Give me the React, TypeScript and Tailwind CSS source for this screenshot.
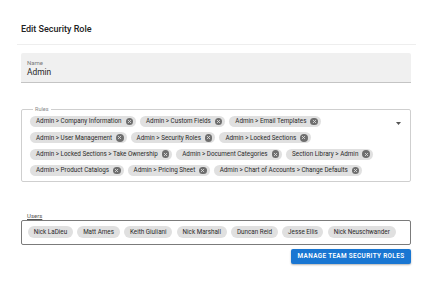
import { X } from "lucide-react";

const rules = [
  "Admin > Company Information",
  "Admin > Custom Fields",
  "Admin > Email Templates",
  "Admin > User Management",
  "Admin > Security Roles",
  "Admin > Locked Sections",
  "Admin > Locked Sections > Take Ownership",
  "Admin > Document Categories",
  "Section Library > Admin",
  "Admin > Product Catalogs",
  "Admin > Pricing Sheet",
  "Admin > Chart of Accounts > Change Defaults",
];

const users = [
  "Nick LaDieu",
  "Matt Ames",
  "Keith Giuliani",
  "Nick Marshall",
  "Duncan Reid",
  "Jesse Ellis",
  "Nick Neuschwander",
];

const DeleteIcon = () => (
  <span className="w-[7.5px] h-[7.5px] rounded-full bg-[#6e6e6e] flex items-center justify-center">
    <X size={5} strokeWidth={4} color="#e0e0e0" />
  </span>
);

const RuleChip = ({ label }: { label: string }) => (
  <div className="h-[11px] rounded-full bg-[#e0e0e0] inline-flex items-center pl-[6px] pr-[3px] gap-[4px]">
    <span className="text-[6.3px] leading-none text-[#2a2a2a] whitespace-nowrap">
      {label}
    </span>
    <DeleteIcon />
  </div>
);

export default function App() {
  return (
    <div className="w-[432px] h-[288px] bg-white font-['Roboto',sans-serif] overflow-hidden">
      {/* header */}
      <div className="ml-[17px] w-[399px] pt-[23px] pb-[8px] border-b border-[#eeeeee]">
        <h2 className="pl-[4px] text-[9px] leading-[13px] font-medium text-[#222]">
          Edit Security Role
        </h2>
      </div>

      <div className="ml-[21px] w-[390px] flex flex-col">
        {/* name field */}
        <div className="mt-[8px] h-[30px] bg-[#f0f0f0] rounded-t-[2px] border-b-[1.5px] border-[#c4c4c4] px-[6px] pt-[6px]">
          <div className="text-[6px] leading-[7px] text-[#7a7a7a]">Name</div>
          <div className="text-[8.4px] leading-[12px] text-[#1f1f1f]">Admin</div>
        </div>

        {/* rules */}
        <fieldset className="mt-[23px] border border-[#cfcfcf] rounded-[2px] pl-[8px] pr-[4px] pb-[5px]">
          <legend className="ml-[3px] px-[2px] text-[5.5px] leading-[6px] text-[#8a8a8a]">
            Rules
          </legend>
          <div className="flex pt-[4px]">
            <div className="w-[360px] flex flex-wrap gap-x-[4px] gap-y-[5.3px]">
              {rules.map((r) => (
                <RuleChip key={r} label={r} />
              ))}
            </div>
            <div className="flex-1 flex justify-center pt-[6px]">
              <svg width="5" height="3" viewBox="0 0 5 3">
                <path d="M0 0 L5 0 L2.5 3 Z" fill="#555" />
              </svg>
            </div>
          </div>
        </fieldset>

        {/* users */}
        <div className="mt-[29px] pl-[6px] text-[6px] leading-[9px] text-[#555] underline">
          Users
        </div>
        <div className="h-[25px] border-[1.5px] border-[#7b7b7b] rounded-[2px] flex items-center gap-[4.5px] pl-[6px]">
          {users.map((u) => (
            <div
              key={u}
              className="h-[12px] rounded-full bg-[#e0e0e0] flex items-center px-[5.75px] text-[6.3px] leading-none text-[#2a2a2a] whitespace-nowrap"
            >
              {u}
            </div>
          ))}
        </div>

        <button className="mt-[4px] self-end w-[120px] h-[15px] rounded-[2px] bg-[#1976d2] text-white text-[6.4px] font-semibold tracking-[0.35px] shadow-[0_1px_2px_rgba(0,0,0,0.3)]">
          MANAGE TEAM SECURITY ROLES
        </button>
      </div>
    </div>
  );
}
